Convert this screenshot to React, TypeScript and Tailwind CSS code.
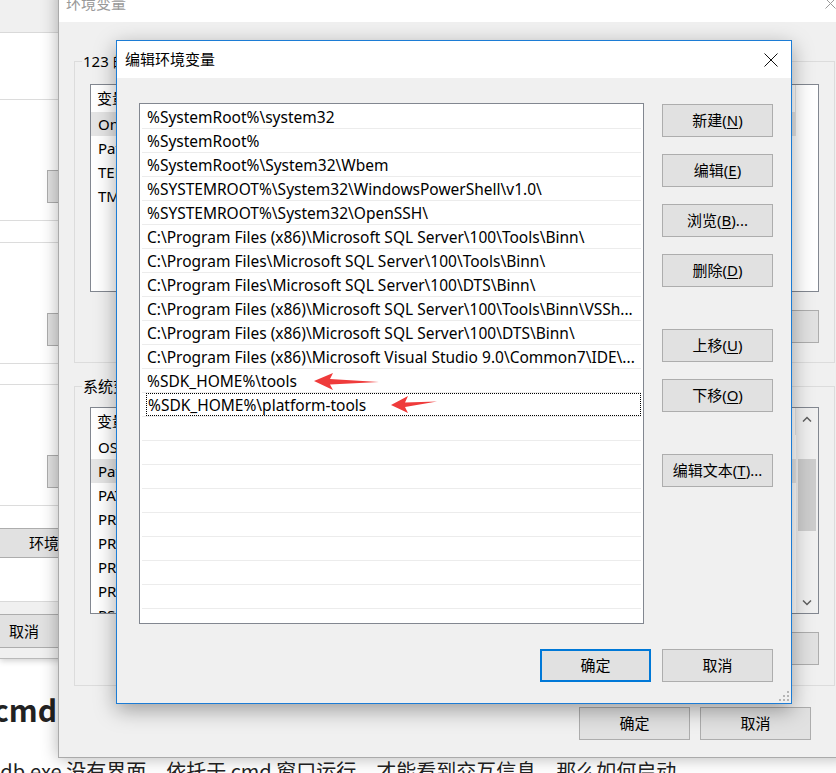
import React from "react";

// 路径列表（编辑环境变量对话框）
const paths = [
  "%SystemRoot%\\system32",
  "%SystemRoot%",
  "%SystemRoot%\\System32\\Wbem",
  "%SYSTEMROOT%\\System32\\WindowsPowerShell\\v1.0\\",
  "%SYSTEMROOT%\\System32\\OpenSSH\\",
  "C:\\Program Files (x86)\\Microsoft SQL Server\\100\\Tools\\Binn\\",
  "C:\\Program Files\\Microsoft SQL Server\\100\\Tools\\Binn\\",
  "C:\\Program Files\\Microsoft SQL Server\\100\\DTS\\Binn\\",
  "C:\\Program Files (x86)\\Microsoft SQL Server\\100\\Tools\\Binn\\VSSh...",
  "C:\\Program Files (x86)\\Microsoft SQL Server\\100\\DTS\\Binn\\",
  "C:\\Program Files (x86)\\Microsoft Visual Studio 9.0\\Common7\\IDE\\...",
  "%SDK_HOME%\\tools",
  "%SDK_HOME%\\platform-tools",
];

const userVars = [
  ["OneDrive", "C:\\Users\\123\\OneDrive"],
  ["Path", "C:\\Users\\123\\AppData\\Local\\Microsoft\\WindowsApps;"],
  ["TEMP", "%USERPROFILE%\\AppData\\Local\\Temp"],
  ["TMP", "%USERPROFILE%\\AppData\\Local\\Temp"],
];

const sysVars = [
  ["OS", "Windows_NT"],
  ["Path", "%SystemRoot%\\system32;%SystemRoot%;"],
  ["PATHEXT", ".COM;.EXE;.BAT;.CMD;.VBS;.VBE;.JS"],
  ["PROCESSOR_ARCHITECTURE", "AMD64"],
  ["PROCESSOR_IDENTIFIER", "Intel64 Family 6 Model 158"],
  ["PROCESSOR_LEVEL", "6"],
  ["PROCESSOR_REVISION", "9e09"],
  ["PSModulePath", "%ProgramFiles%\\WindowsPowerShell\\Modules;"],
];

const Btn = ({
  children,
  def = false,
}: {
  children: React.ReactNode;
  def?: boolean;
}) => (
  <div
    className={`flex h-[33px] w-[111px] shrink-0 items-center justify-center bg-[#e1e1e1] text-[15px] ${
      def ? "border-2 border-[#0078d7]" : "border border-[#adadad]"
    }`}
  >
    {children}
  </div>
);

const U = ({ children }: { children: React.ReactNode }) => (
  <span className="underline underline-offset-[2px]">{children}</span>
);

const CloseX = ({ size, color }: { size: number; color: string }) => (
  <svg width={size} height={size} viewBox={`0 0 ${size} ${size}`}>
    <path d={`M0.5 0.5 L${size - 0.5} ${size - 0.5} M${size - 0.5} 0.5 L0.5 ${size - 0.5}`} stroke={color} strokeWidth="1" />
  </svg>
);

// 列表视图（环境变量窗口里的两个表格）
const ListView = ({
  rows,
  selected,
  height,
  scroll = false,
}: {
  rows: string[][];
  selected: number;
  height: string;
  scroll?: boolean;
}) => (
  <div className={`flex w-[729px] ${height} overflow-hidden border border-[#828790] bg-white text-[15px]`}>
    <div className="flex w-[705px] shrink-0 flex-col">
      <div className="flex h-[27px] shrink-0">
        <div className="flex w-[240px] items-center border-r border-[#e5e5e5] pl-[6px]">变量</div>
        <div className="flex flex-1 items-center border-r border-[#e5e5e5] pl-[6px]">值</div>
      </div>
      {rows.map(([k, v], i) => (
        <div
          key={k + i}
          className={`flex h-[24px] shrink-0 items-center overflow-hidden whitespace-nowrap ${i === selected ? "bg-[#e5e5e5]" : ""}`}
        >
          <span className="w-[241px] shrink-0 overflow-hidden pl-[7px]">{k}</span>
          <span className="min-w-0 max-w-[430px] overflow-hidden pl-[6px]">{v}</span>
        </div>
      ))}
    </div>
    {scroll && (
      <div className="flex w-[22px] flex-col bg-[#f0f0f0]">
        <div className="flex h-[21px] items-center justify-center">
          <svg width="10" height="6" viewBox="0 0 10 6">
            <path d="M1 5.5 L5 1.5 L9 5.5" stroke="#606060" strokeWidth="1.5" fill="none" />
          </svg>
        </div>
        <div className="flex-1 px-[2px] pt-[30px]">
          <div className="h-[72px] bg-[#cdcdcd]" />
        </div>
        <div className="flex h-[21px] items-center justify-center">
          <svg width="10" height="6" viewBox="0 0 10 6">
            <path d="M1 0.5 L5 4.5 L9 0.5" stroke="#606060" strokeWidth="1.5" fill="none" />
          </svg>
        </div>
      </div>
    )}
  </div>
);

// 后面的“系统属性”窗口，只露出左边一条
const SystemDialog = () => (
  <div className="absolute left-0 top-0 flex h-[659px] w-[120px] flex-col border-b border-[#b9b9b9] bg-[#f0f0f0] text-[15px] shadow-[0_2px_6px_rgba(0,0,0,0.18)]">
    <div className="h-[32px] shrink-0" />
    <div className="flex h-[570px] shrink-0 flex-col border-y border-[#d9d9d9] bg-white pt-[66px]">
      {[0, 1, 2].map((g) => (
        <div
          key={g}
          className={`-ml-[20px] h-[122px] w-[200px] shrink-0 border border-[#dcdcdc] pl-[66px] pt-[70px] ${
            g === 1 ? "mt-[21px]" : g === 2 ? "mt-[20px]" : ""
          }`}
        >
          <Btn>设置(S)...</Btn>
        </div>
      ))}
      <div className="mt-[22px] flex h-[30px] items-center border-y border-[#adadad] bg-[#e1e1e1] pl-[29px] whitespace-nowrap">
        环境变量(N)...
      </div>
    </div>
    <div className="mt-[12px] flex h-[34px] items-center border-y border-[#adadad] bg-[#e1e1e1] pl-[9px]">取消</div>
  </div>
);

// “环境变量”窗口
const EnvDialog = () => (
  <div className="absolute left-[58px] top-[-16px] flex h-[774px] w-[792px] flex-col border border-[#aaaaaa] bg-[#f0f0f0] text-[15px] shadow-[0_0_16px_rgba(0,0,0,0.3)]">
    <div className="flex h-[37px] shrink-0 items-center justify-between bg-white pl-[7px] pr-[13px] text-[#999]">
      <span>环境变量</span>
      <CloseX size={11} color="#999" />
    </div>
    <div className="flex flex-col pl-[15px] pr-[14px] pt-[39px]">
      <div className="relative h-[302px] border border-[#dcdcdc] px-[15px] pt-[22px]">
        <span className="absolute -top-[11px] left-[7px] bg-[#f0f0f0] px-[1px] leading-[20px]">
          123 的用户变量(<U>U</U>)
        </span>
        <ListView rows={userVars} selected={0} height="h-[208px]" />
        <div className="mt-[18px] flex justify-end gap-[11px]">
          <Btn>新建(<U>N</U>)...</Btn>
          <Btn>编辑(<U>E</U>)...</Btn>
          <Btn>删除(<U>D</U>)</Btn>
        </div>
      </div>
      <div className="relative mt-[23px] h-[300px] border border-[#dcdcdc] px-[15px] pt-[20px]">
        <span className="absolute -top-[11px] left-[7px] bg-[#f0f0f0] px-[1px] leading-[20px]">
          系统变量(<U>S</U>)
        </span>
        <ListView rows={sysVars} selected={1} height="h-[207px]" scroll />
        <div className="mt-[18px] flex justify-end gap-[11px]">
          <Btn>新建(<U>W</U>)...</Btn>
          <Btn>编辑(<U>I</U>)...</Btn>
          <Btn>删除(<U>L</U>)</Btn>
        </div>
      </div>
      <div className="mt-[21px] flex justify-end gap-[10px] pr-[24px]">
        <Btn>确定</Btn>
        <Btn>取消</Btn>
      </div>
    </div>
  </div>
);

// 前面的“编辑环境变量”窗口
const EditDialog = () => (
  <div className="absolute left-[116px] top-[40px] flex h-[664px] w-[676px] flex-col border border-[#1c7cd5] bg-[#f0f0f0] text-[15px] shadow-[0_6px_20px_rgba(0,0,0,0.35)]">
    <div className="flex h-[37px] shrink-0 items-center justify-between bg-white pl-[8px] pr-[13px]">
      <span>编辑环境变量</span>
      <CloseX size={14} color="#111" />
    </div>
    <div className="flex flex-col pl-[22px] pr-[18px] pt-[25px]">
      <div className="flex">
        <div className="flex h-[521px] w-[505px] shrink-0 flex-col overflow-hidden border border-[#828790] bg-white px-[1px] pt-[1px] text-[15.5px]">
          {Array.from({ length: 22 }).map((_, i) => (
            <div
              key={i}
              className="mx-[1px] flex h-[24px] shrink-0 items-center whitespace-nowrap border-b border-[#ececec]"
            >
              {i === 12 ? (
                <div className="ml-[4px] flex h-full flex-1 items-center border border-dotted border-black pl-[1px] pt-[2px]">
                  {paths[i]}
                </div>
              ) : (
                <span className="pl-[5px] pt-[2px]">{paths[i] ?? ""}</span>
              )}
            </div>
          ))}
        </div>
        <div className="ml-[18px] flex flex-col pt-[1px]">
          <Btn>新建(<U>N</U>)</Btn>
          <div className="mt-[17px]"><Btn>编辑(<U>E</U>)</Btn></div>
          <div className="mt-[17px]"><Btn>浏览(<U>B</U>)...</Btn></div>
          <div className="mt-[17px]"><Btn>删除(<U>D</U>)</Btn></div>
          <div className="mt-[42px]"><Btn>上移(<U>U</U>)</Btn></div>
          <div className="mt-[17px]"><Btn>下移(<U>O</U>)</Btn></div>
          <div className="mt-[42px]"><Btn>编辑文本(<U>T</U>)...</Btn></div>
        </div>
      </div>
      <div className="mt-[25px] flex justify-end gap-[11px]">
        <Btn def>确定</Btn>
        <Btn>取消</Btn>
      </div>
    </div>
    {/* 右下角的拖动手柄 */}
    <svg className="absolute bottom-[2px] right-[2px]" width="10" height="10" viewBox="0 0 10 10">
      <g fill="#b5b5b5">
        <rect x="8" y="0" width="2" height="2" />
        <rect x="4" y="4" width="2" height="2" />
        <rect x="8" y="4" width="2" height="2" />
        <rect x="0" y="8" width="2" height="2" />
        <rect x="4" y="8" width="2" height="2" />
        <rect x="8" y="8" width="2" height="2" />
      </g>
    </svg>
  </div>
);

export default function App() {
  return (
    <div className="relative h-[773px] w-[836px] overflow-hidden bg-white font-['Noto_Sans','Noto_Sans_CJK_SC',sans-serif] text-black">
      {/* 网页正文 */}
      <div className="pt-[694px] font-['Noto_Sans_CJK_SC',sans-serif] text-[#222]">
        <h2 className="-ml-[7px] text-[30px] font-bold leading-[30px]">cmd</h2>
        <p className="-ml-[11px] mt-[37px] whitespace-nowrap text-[20px] leading-[20px]">
          adb.exe 没有界面，依托于 cmd 窗口运行，才能看到交互信息，那么如何启动
        </p>
      </div>

      <SystemDialog />
      <EnvDialog />
      <EditDialog />

      {/* 红色箭头标注 */}
      <svg className="absolute left-[313px] top-[371px]" width="68" height="21" viewBox="0 0 68 21">
        <polygon points="1,10 20,2 17,8 66,11 17,13.5 20,19" fill="#ef3b3b" />
      </svg>
      <svg className="absolute left-[390px] top-[394px]" width="48" height="20" viewBox="0 0 48 20">
        <polygon points="1,11 18,2 15,8.5 47,7.5 15,13 18,19" fill="#ef3b3b" />
      </svg>
    </div>
  );
}
